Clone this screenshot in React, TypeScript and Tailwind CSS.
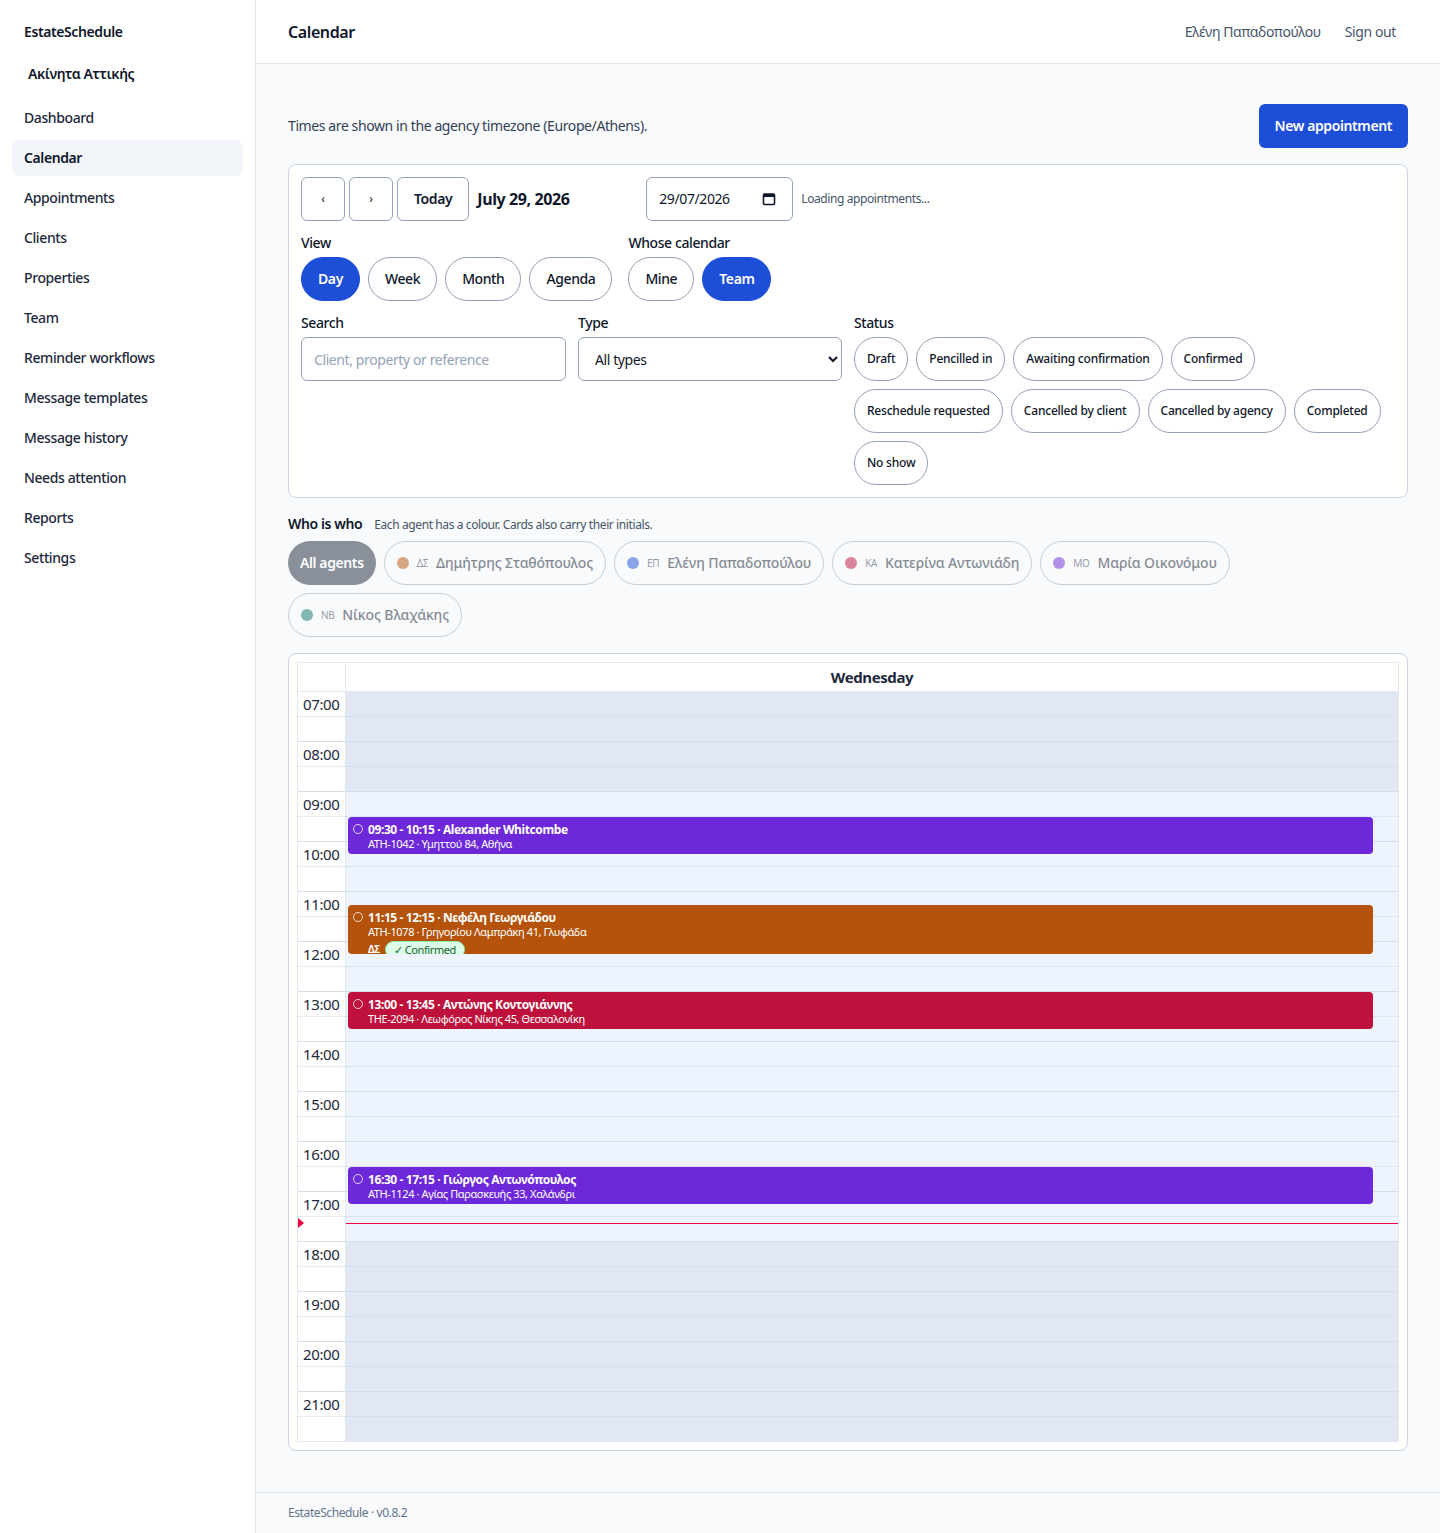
const NAV = [
  "Dashboard",
  "Calendar",
  "Appointments",
  "Clients",
  "Properties",
  "Team",
  "Reminder workflows",
  "Message templates",
  "Message history",
  "Needs attention",
  "Reports",
  "Settings",
];

const STATUSES = [
  "Draft",
  "Pencilled in",
  "Awaiting confirmation",
  "Confirmed",
  "Reschedule requested",
  "Cancelled by client",
  "Cancelled by agency",
  "Completed",
  "No show",
];

const AGENTS = [
  { initials: "ΔΣ", name: "Δημήτρης Σταθόπουλος", dot: "bg-[#b45309]" },
  { initials: "ΕΠ", name: "Ελένη Παπαδοπούλου", dot: "bg-[#1d4ed8]" },
  { initials: "ΚΑ", name: "Κατερίνα Αντωνιάδη", dot: "bg-[#be123c]" },
  { initials: "ΜΟ", name: "Μαρία Οικονόμου", dot: "bg-[#6d28d9]" },
  { initials: "ΝΒ", name: "Νίκος Βλαχάκης", dot: "bg-[#0f766e]" },
];

const HOURS = [7, 8, 9, 10, 11, 12, 13, 14, 15, 16, 17, 18, 19, 20, 21];

const EVENTS = [
  {
    start: 9.5,
    end: 10.25,
    title: "09:30 - 10:15 · Alexander Whitcombe",
    sub: "ATH-1042 · Υμηττού 84, Αθήνα",
    color: "bg-[#6d28d9]",
  },
  {
    start: 11.25,
    end: 12.25,
    title: "11:15 - 12:15 · Νεφέλη Γεωργιάδου",
    sub: "ATH-1078 · Γρηγορίου Λαμπράκη 41, Γλυφάδα",
    color: "bg-[#b45309]",
    agent: "ΔΣ",
    status: "Confirmed",
  },
  {
    start: 13,
    end: 13.75,
    title: "13:00 - 13:45 · Αντώνης Κοντογιάννης",
    sub: "THE-2094 · Λεωφόρος Νίκης 45, Θεσσαλονίκη",
    color: "bg-[#be123c]",
  },
  {
    start: 16.5,
    end: 17.25,
    title: "16:30 - 17:15 · Γιώργος Αντωνόπουλος",
    sub: "ATH-1124 · Αγίας Παρασκευής 33, Χαλάνδρι",
    color: "bg-[#6d28d9]",
  },
];

const HOUR_PX = 50;
const DAY_START = 7;
const NOW = 17 + 37 / 60;

function Pill({ label, active }: { label: string; active?: boolean }) {
  return (
    <button
      className={
        active
          ? "h-11 px-4 rounded-full bg-[#1d4ed8] text-white text-sm font-semibold border border-[#1d4ed8]"
          : "h-11 px-4 rounded-full bg-white text-[#0f172a] text-sm font-medium border border-[#94a3b8]"
      }
    >
      {label}
    </button>
  );
}

function CalendarIcon() {
  return (
    <svg width="14" height="14" viewBox="0 0 14 14" fill="none">
      <rect x="1.5" y="2" width="11" height="10.5" rx="1" stroke="#0f172a" strokeWidth="1.6" />
      <rect x="1.5" y="2" width="11" height="3" fill="#0f172a" />
    </svg>
  );
}

function Sidebar() {
  return (
    <aside className="w-[256px] shrink-0 bg-white border-r border-[#e2e8f0] px-3">
      <div className="h-16 flex items-center px-3 text-sm font-semibold text-[#0f172a]">EstateSchedule</div>
      <div className="h-5 px-4 text-sm font-semibold text-[#0f172a] leading-5">Ακίνητα Αττικής</div>
      <nav className="mt-4 flex flex-col gap-1">
        {NAV.map((item) => (
          <a
            key={item}
            className={
              item === "Calendar"
                ? "h-9 flex items-center px-3 rounded-lg bg-[#f1f5f9] text-sm font-semibold text-[#0f172a]"
                : "h-9 flex items-center px-3 rounded-lg text-sm font-medium text-[#1e293b]"
            }
          >
            {item}
          </a>
        ))}
      </nav>
    </aside>
  );
}

function Filters() {
  return (
    <div className="bg-white border border-[#cbd5e1] rounded-lg p-3 flex flex-col gap-3">
      <div className="flex items-center gap-2">
        <div className="flex gap-1">
          <button className="w-11 h-11 rounded-md border border-[#94a3b8] bg-white text-xs text-[#0f172a]">‹</button>
          <button className="w-11 h-11 rounded-md border border-[#94a3b8] bg-white text-xs text-[#0f172a]">›</button>
          <button className="h-11 px-4 rounded-md border border-[#94a3b8] bg-white text-sm font-semibold text-[#0f172a]">
            Today
          </button>
        </div>
        <div className="w-[161px] text-base font-bold text-[#0f172a]">July 29, 2026</div>
        <div className="w-[147px] h-11 rounded-md border border-[#94a3b8] bg-white flex items-center justify-between pl-3 pr-4 text-sm text-[#0f172a]">
          <span>29/07/2026</span>
          <CalendarIcon />
        </div>
        <span className="text-xs text-[#475569]">Loading appointments...</span>
      </div>

      <div className="flex gap-4">
        <div className="flex flex-col gap-1">
          <span className="text-sm font-medium text-[#0f172a] leading-5">View</span>
          <div className="flex gap-2">
            <Pill label="Day" active />
            <Pill label="Week" />
            <Pill label="Month" />
            <Pill label="Agenda" />
          </div>
        </div>
        <div className="flex flex-col gap-1">
          <span className="text-sm font-medium text-[#0f172a] leading-5">Whose calendar</span>
          <div className="flex gap-2">
            <Pill label="Mine" />
            <Pill label="Team" active />
          </div>
        </div>
      </div>

      <div className="grid grid-cols-[265px_264px_1fr] gap-3">
        <div className="flex flex-col gap-1">
          <span className="text-sm font-medium text-[#0f172a] leading-5">Search</span>
          <input
            className="h-11 rounded-md border border-[#94a3b8] bg-white px-3 text-sm text-[#0f172a] placeholder:text-[#94a3b8] outline-none"
            placeholder="Client, property or reference"
          />
        </div>
        <div className="flex flex-col gap-1">
          <span className="text-sm font-medium text-[#0f172a] leading-5">Type</span>
          <select className="h-11 rounded-md border border-[#94a3b8] bg-white px-3 text-sm text-[#0f172a]">
            <option>All types</option>
          </select>
        </div>
        <div className="flex flex-col gap-1">
          <span className="text-sm font-medium text-[#0f172a] leading-5">Status</span>
          <div className="flex flex-wrap gap-2">
            {STATUSES.map((s) => (
              <button
                key={s}
                className="h-11 px-3 rounded-full border border-[#94a3b8] bg-white text-xs tracking-[-0.018em] font-medium text-[#0f172a]"
              >
                {s}
              </button>
            ))}
          </div>
        </div>
      </div>
    </div>
  );
}

function Legend() {
  return (
    <div className="flex flex-col gap-[7px]">
      <div className="flex items-baseline gap-3">
        <span className="text-sm font-semibold text-[#0f172a]">Who is who</span>
        <span className="text-xs text-[#475569]">Each agent has a colour. Cards also carry their initials.</span>
      </div>
      <div className="max-w-[960px] flex flex-wrap gap-2 opacity-50">
        <button className="h-11 px-3 rounded-full bg-[#1e293b] text-white text-sm font-semibold">All agents</button>
        {AGENTS.map((a) => (
          <button
            key={a.initials}
            className="h-11 pl-3 pr-3 rounded-full border border-[#94a3b8] flex items-center gap-2"
          >
            <span className={`w-3 h-3 rounded-full ${a.dot}`} />
            <span className="text-[10px] text-[#334155]">{a.initials}</span>
            <span className="text-sm tracking-[-0.008em] font-medium text-[#0f172a]">{a.name}</span>
          </button>
        ))}
      </div>
    </div>
  );
}

function DayGrid() {
  const nowTop = Math.round((NOW - DAY_START) * HOUR_PX);
  return (
    <div className="bg-white border border-[#cbd5e1] rounded-lg p-2">
      <div className="border border-[#e2e8f0]">
        <div className="flex h-[29px] border-b border-[#e2e8f0]">
          <div className="w-12 border-r border-[#e2e8f0]" />
          <div className="flex-1 text-center text-[15px] font-bold text-[#1e293b] leading-7">Wednesday</div>
        </div>
        <div className="relative">
          {HOURS.map((h, i) => {
            const working = h >= 9 && h < 18;
            return (
              <div
                key={h}
                className={
                  i === HOURS.length - 1
                    ? "flex h-[49px]"
                    : "flex h-[50px] border-b border-[#d6dde8]"
                }
              >
                <div className="w-12 border-r border-[#e2e8f0] bg-white">
                  <div className="h-[25px] border-b border-dotted border-[#cfd8e4] pl-[5px] pt-[2px] text-[15px] leading-5 text-[#1e293b]">
                    {String(h).padStart(2, "0")}:00
                  </div>
                </div>
                <div className={working ? "flex-1 bg-[#eef4fd]" : "flex-1 bg-[#e1e7f3]"}>
                  <div className="h-[25px] border-b border-dotted border-[#cfd8e4]" />
                </div>
              </div>
            );
          })}

          {EVENTS.map((e) => (
            <div
              key={e.title}
              className={`absolute left-[50px] right-[25px] rounded-[4px] overflow-hidden text-white ${e.color}`}
              style={{
                top: (e.start - DAY_START) * HOUR_PX,
                height: (e.end - e.start) * HOUR_PX - 1,
              }}
            >
              <div className="flex gap-[5px] pl-[5px] pt-[5px]">
                <span className="mt-[2px] w-[10px] h-[10px] shrink-0 rounded-full border border-white/80" />
                <div className="flex flex-col">
                  <span className="text-xs font-bold leading-[15px]">{e.title}</span>
                  <span className="text-[11px] leading-[14px]">{e.sub}</span>
                  {e.agent && (
                    <div className="flex items-center gap-[5px] mt-[2px]">
                      <span className="text-[10px] font-bold">{e.agent}</span>
                      <span className="px-2 rounded-full bg-[#dcfce7] border border-[#86efac] text-[#166534] text-[11px] leading-[15px]">
                        ✓ {e.status}
                      </span>
                    </div>
                  )}
                </div>
              </div>
            </div>
          ))}

          {/* current time marker */}
          <div className="absolute z-10 left-12 right-0 h-px bg-rose-600" style={{ top: nowTop }} />
          <div
            className="absolute z-10 left-0 w-0 h-0 border-y-[5px] border-y-transparent border-l-[6px] border-l-rose-600"
            style={{ top: nowTop - 5 }}
          />
        </div>
      </div>
    </div>
  );
}

export default function App() {
  return (
    <div className="flex min-h-screen bg-[#f8fafc] font-['Noto_Sans',_'Open_Sans',_sans-serif] tracking-[-0.025em] text-[#0f172a]">
      <Sidebar />
      <div className="flex-1 flex flex-col min-w-0">
        <header className="h-16 shrink-0 bg-white border-b border-[#e2e8f0] px-8 flex items-center justify-between">
          <h1 className="text-base font-semibold text-[#0f172a]">Calendar</h1>
          <div className="flex items-center gap-3 text-sm text-[#475569]">
            <span>Ελένη Παπαδοπούλου</span>
            <button className="px-3">Sign out</button>
          </div>
        </header>

        <main className="flex-1 px-8 py-10 flex flex-col gap-4">
          <div className="flex items-center justify-between">
            <p className="text-sm text-[#334155]">Times are shown in the agency timezone (Europe/Athens).</p>
            <button className="h-11 px-4 rounded-md bg-[#1d4ed8] text-white text-sm font-semibold">
              New appointment
            </button>
          </div>
          <Filters />
          <Legend />
          <DayGrid />
        </main>

        <footer className="border-t border-[#e2e8f0] px-8 py-3 text-xs text-[#64748b] leading-4">
          EstateSchedule · v0.8.2
        </footer>
      </div>
    </div>
  );
}
